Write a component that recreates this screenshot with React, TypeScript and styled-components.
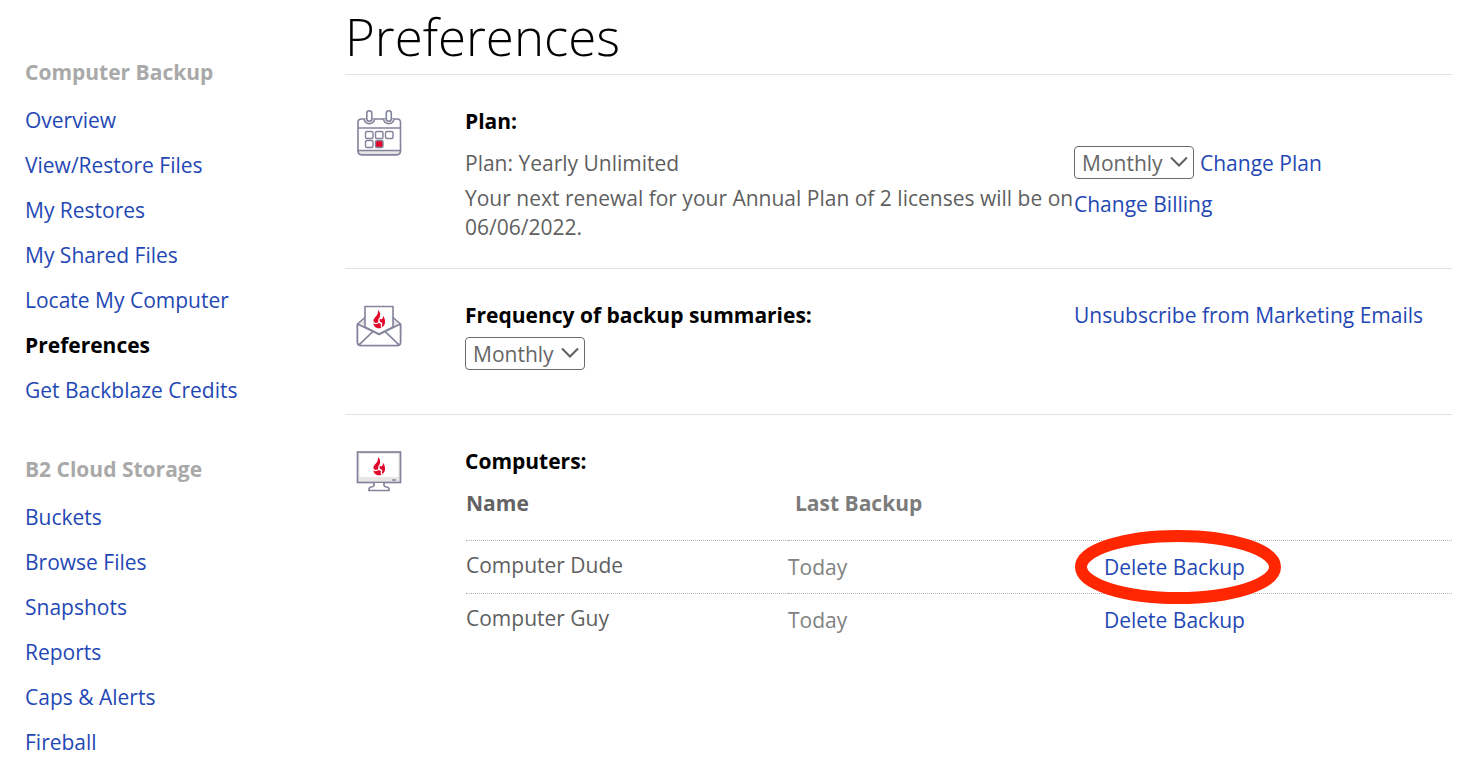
import React from "react";
import styled, { createGlobalStyle } from "styled-components";

const GlobalStyle = createGlobalStyle`
  *, *::before, *::after { box-sizing: border-box; }
  body {
    margin: 0;
    background: #fff;
    color: #5f5f5f;
    font-family: "Open Sans", "Noto Sans", sans-serif;
    font-size: 21px;
    line-height: 29px;
  }
`;

const Page = styled.div`
  display: grid;
  grid-template-columns: 320px minmax(0, 1fr);
  padding: 0 22px 0 25px;
`;

const Sidebar = styled.nav`
  padding-top: 58px;
`;

const NavGroup = styled.section`
  margin-bottom: 42px;

  &:last-child {
    margin-bottom: 0;
  }
`;

const NavTitle = styled.h2`
  margin: 0 0 11px;
  font-size: 21px;
  line-height: 29px;
  font-weight: 700;
  color: #a9a9a9;
`;

const NavList = styled.ul`
  margin: 0;
  padding: 0;
  list-style: none;
`;

const Link = styled.a`
  color: #1f48b5;
  text-decoration: none;

  &:hover {
    text-decoration: underline;
  }
`;

const NavLink = styled(Link)<{ $active?: boolean }>`
  display: block;
  line-height: 45px;
  color: ${(p) => (p.$active ? "#000" : "#1f48b5")};
  font-weight: ${(p) => (p.$active ? 700 : 400)};
`;

const Title = styled.h1`
  margin: 0;
  height: 75px;
  border-bottom: 1px solid #e3e3e3;
  font-size: 51px;
  line-height: 72px;
  font-weight: 300;
  color: #000;
`;

const Section = styled.section`
  display: grid;
  grid-template-columns: 120px minmax(0, 1fr);
  padding: 32px 0 26px;
  border-bottom: 1px solid #e3e3e3;

  &:last-child {
    border-bottom: 0;
    padding-bottom: 0;
  }
`;

const IconCell = styled.div`
  padding: 3px 0 0 11px;

  svg {
    display: block;
  }
`;

const Columns = styled.div`
  display: grid;
  grid-template-columns: minmax(0, 609fr) minmax(0, 378fr);
`;

const Heading = styled.h3`
  margin: 0;
  font-size: 21px;
  line-height: 29px;
  font-weight: 700;
  color: #000;
`;

const PlanDetails = styled.div`
  padding-top: 13px;
`;

const Text = styled.p`
  margin: 0 0 6px;

  &:last-child {
    margin-bottom: 0;
  }
`;

const PlanActions = styled.div`
  display: flex;
  flex-direction: column;
  align-items: flex-start;
  gap: 11px;
  padding-top: 39px;
`;

const ActionRow = styled.div`
  display: flex;
  align-items: baseline;
  gap: 6px;
`;

const SelectBox = styled.div`
  position: relative;
  width: 120px;
  height: 33px;

  svg {
    position: absolute;
    right: 6px;
    top: 10px;
    pointer-events: none;
  }
`;

const SelectField = styled.select`
  appearance: none;
  display: block;
  width: 100%;
  height: 100%;
  padding: 2px 0 0 7px;
  border: 1px solid #6b6b6b;
  border-radius: 4px;
  background: #fff;
  color: #666;
  font: inherit;
`;

const FrequencyRow = styled.div`
  padding: 7px 0 18px;
`;

const Table = styled.table`
  width: calc(100% - 1px);
  margin: 13px 0 0 1px;
  border-collapse: collapse;
  table-layout: fixed;
`;

const HeadCell = styled.th<{ $width?: string; $inset?: boolean }>`
  width: ${(p) => p.$width ?? "auto"};
  height: 51px;
  padding: 0 0 0 ${(p) => (p.$inset ? "7px" : "0")};
  text-align: left;
  vertical-align: top;
  font-weight: 700;
  color: ${(p) => (p.$inset ? "#7c7c7c" : "#636363")};
`;

const Row = styled.tr`
  border-top: 1px dotted #b4b4b4;
`;

const Cell = styled.td<{ $tone?: string; $drop?: boolean }>`
  height: 53px;
  padding: ${(p) => (p.$drop ? "12px" : "10px")} 0 0;
  vertical-align: top;
  color: ${(p) => p.$tone ?? "inherit"};
`;

const Marked = styled.span`
  position: relative;
  display: inline-block;

  > svg {
    position: absolute;
    left: -29px;
    top: -23px;
    pointer-events: none;
  }
`;

const Chevron = () => (
  <svg width="18" height="12" viewBox="0 0 18 12" fill="none" aria-hidden="true">
    <path d="M1 1.5 L9 9.5 L17 1.5" stroke="#5f5f5f" strokeWidth="2" />
  </svg>
);

const Flame = ({ x, y }: { x: number; y: number }) => (
  <g transform={`translate(${x} ${y})`} fill="#e3062a">
    <path d="M5 0 C6.800 1.600 7.600 4 7 6.200 C6.500 8 5.200 8.800 5.200 10.400 C5.200 11.400 5.500 12 4.600 12.500 C3.200 13.300 1.300 13 .5 11.600 C0 9.800 1.400 8.200 2.800 6.600 C4.500 4.700 5.500 2.600 5 0 Z" />
    <path d="M9.600 5.300 C11.400 7.400 12.300 10 12 12.600 C11.800 14.600 11 16 9.700 17 C8.700 16.200 8.900 15 9.300 13.900 C9.600 12.900 8.800 12.700 7.800 12.300 C6.500 11.700 6.200 10.300 6.900 9.100 C7.700 8.700 8 9.500 8.800 9.200 C10.100 8.600 10.200 6.700 9.600 5.300 Z" />
    <path d="M.4 13.300 C2 14.600 4.200 14.300 5.800 13 C6.500 13.500 7.300 13.700 8 13.900 C7.500 15.200 7.600 16.500 8.500 17.700 C6 18.800 3.200 18.200 1.600 16.400 C.8 15.500 .4 14.400 .4 13.300 Z" />
  </g>
);

const CalendarIcon = () => (
  <svg width="46" height="46" viewBox="0 0 46 46" fill="none" aria-hidden="true">
    <g stroke="#83839b" strokeWidth="1.600">
      <path d="M5.500 9 H41 Q44.500 9 44.500 12.500 V41 L41 44.700 H5.500 L2 41 V12.500 Q2 9 5.500 9 Z" fill="#fff" />
      <path d="M2 40.500 H44.500 Q44.500 44.700 41 44.700 H5.500 Q2 44.700 2 40.500 Z" fill="#e5e5e5" />
      <path d="M2 18 H44.500" />
      <path d="M8 9 Q8.500 13.700 13.300 13.700 Q18 13.700 18.500 9" fill="#e5e5e5" />
      <path d="M27.500 9 Q28 13.700 32.800 13.700 Q37.500 13.700 38 9" fill="#e5e5e5" />
      <rect x="10.800" y=".8" width="5" height="10.500" rx="2.500" fill="#fff" />
      <rect x="30.300" y=".8" width="5" height="10.500" rx="2.500" fill="#fff" />
    </g>
    <g stroke="#83839b" strokeWidth="1.400">
      <rect x="9.500" y="21.500" width="7.500" height="7" rx="1.500" />
      <rect x="19.500" y="21.500" width="7.500" height="7" rx="1.500" />
      <rect x="29.500" y="21.500" width="7.500" height="7" rx="1.500" />
      <rect x="9.500" y="30.500" width="7.500" height="7" rx="1.500" />
      <rect x="19.500" y="30.500" width="7.500" height="7" rx="1.500" fill="#e3062a" />
    </g>
  </svg>
);

const MailIcon = () => (
  <svg width="46" height="43" viewBox="0 0 46 43" fill="none" aria-hidden="true">
    <g stroke="#83839b" strokeWidth="1.600" strokeLinejoin="round">
      <path d="M1.500 20 L9.500 13 H36.500 L44.500 20 V38.500 Q44.500 41.500 41.500 41.500 H4.500 Q1.500 41.500 1.500 38.500 Z" fill="#e8e5e5" />
      <path d="M1.500 20 L17 27.500 L3 41 Q1.500 40 1.500 38.500 Z" fill="#fff" />
      <path d="M44.500 20 L29 27.500 L43 41 Q44.500 40 44.500 38.500 Z" fill="#fff" />
      <path d="M3 41 L17 27.500 L23 30.500 L29 27.500 L43 41 Q42.500 41.500 41.500 41.500 H4.500 Q3.500 41.500 3 41 Z" fill="#fff" />
      <path d="M9 2.500 H37 V23 L23 30 L9 23 Z" fill="#fff" />
    </g>
    <Flame x={17} y={6} />
  </svg>
);

const MonitorIcon = () => (
  <svg width="46" height="43" viewBox="0 0 46 43" fill="none" aria-hidden="true">
    <g stroke="#83839b" strokeWidth="1.700">
      <rect x="1.500" y="2" width="43" height="30.500" fill="#e8e5e5" />
      <path d="M18 33 V35.500 Q17.500 37 15 37 Q13 37.500 13 39 V40.500 H33 V39 Q33 37.500 31 37 Q28.500 37 28 35.500 V33" fill="#fff" />
    </g>
    <rect x="3.500" y="4" width="39" height="23" fill="#fff" />
    <path d="M36 30 H40" stroke="#83839b" strokeWidth="1.400" />
    <Flame x={17} y={7} />
  </svg>
);

const Ring = () => (
  <svg width="206" height="74" viewBox="0 0 206 74" fill="none" aria-hidden="true">
    <ellipse cx="103" cy="37" rx="97" ry="31" stroke="#ff2600" strokeWidth="12" />
  </svg>
);

const Select = ({ label, options }: { label: string; options: string[] }) => (
  <SelectBox>
    <SelectField aria-label={label} defaultValue={options[0]}>
      {options.map((o) => (
        <option key={o}>{o}</option>
      ))}
    </SelectField>
    <Chevron />
  </SelectBox>
);

const navGroups = [
  {
    title: "Computer Backup",
    items: [
      "Overview",
      "View/Restore Files",
      "My Restores",
      "My Shared Files",
      "Locate My Computer",
      "Preferences",
      "Get Backblaze Credits",
    ],
  },
  {
    title: "B2 Cloud Storage",
    items: ["Buckets", "Browse Files", "Snapshots", "Reports", "Caps & Alerts", "Fireball"],
  },
];

const computers = [
  { name: "Computer Dude", last: "Today", marked: true },
  { name: "Computer Guy", last: "Today", marked: false },
];

export default function App() {
  return (
    <>
      <GlobalStyle />
      <Page>
        <Sidebar aria-label="Account">
          {navGroups.map((group) => (
            <NavGroup key={group.title}>
              <NavTitle>{group.title}</NavTitle>
              <NavList>
                {group.items.map((item) => (
                  <li key={item}>
                    <NavLink
                      href="#"
                      $active={item === "Preferences"}
                      aria-current={item === "Preferences" ? "page" : undefined}
                    >
                      {item}
                    </NavLink>
                  </li>
                ))}
              </NavList>
            </NavGroup>
          ))}
        </Sidebar>

        <main>
          <Title>Preferences</Title>

          <Section>
            <IconCell>
              <CalendarIcon />
            </IconCell>
            <Columns>
              <div>
                <Heading>Plan:</Heading>
                <PlanDetails>
                  <Text>Plan: Yearly Unlimited</Text>
                  <Text>Your next renewal for your Annual Plan of 2 licenses will be on 06/06/2022.</Text>
                </PlanDetails>
              </div>
              <PlanActions>
                <ActionRow>
                  <Select label="Plan" options={["Monthly", "Yearly"]} />
                  <Link href="#">Change Plan</Link>
                </ActionRow>
                <Link href="#">Change Billing</Link>
              </PlanActions>
            </Columns>
          </Section>

          <Section>
            <IconCell>
              <MailIcon />
            </IconCell>
            <Columns>
              <div>
                <Heading>Frequency of backup summaries:</Heading>
                <FrequencyRow>
                  <Select label="Frequency of backup summaries" options={["Monthly", "Weekly"]} />
                </FrequencyRow>
              </div>
              <Link href="#">Unsubscribe from Marketing Emails</Link>
            </Columns>
          </Section>

          <Section>
            <IconCell>
              <MonitorIcon />
            </IconCell>
            <div>
              <Heading>Computers:</Heading>
              <Table>
                <thead>
                  <tr>
                    <HeadCell scope="col" $width="322px">Name</HeadCell>
                    <HeadCell scope="col" $width="316px" $inset>Last Backup</HeadCell>
                    <HeadCell aria-label="Actions" />
                  </tr>
                </thead>
                <tbody>
                  {computers.map((c) => (
                    <Row key={c.name}>
                      <Cell>{c.name}</Cell>
                      <Cell $tone="#828282" $drop>{c.last}</Cell>
                      <Cell $drop>
                        {c.marked ? (
                          <Marked>
                            <Link href="#">Delete Backup</Link>
                            <Ring />
                          </Marked>
                        ) : (
                          <Link href="#">Delete Backup</Link>
                        )}
                      </Cell>
                    </Row>
                  ))}
                </tbody>
              </Table>
            </div>
          </Section>
        </main>
      </Page>
    </>
  );
}
